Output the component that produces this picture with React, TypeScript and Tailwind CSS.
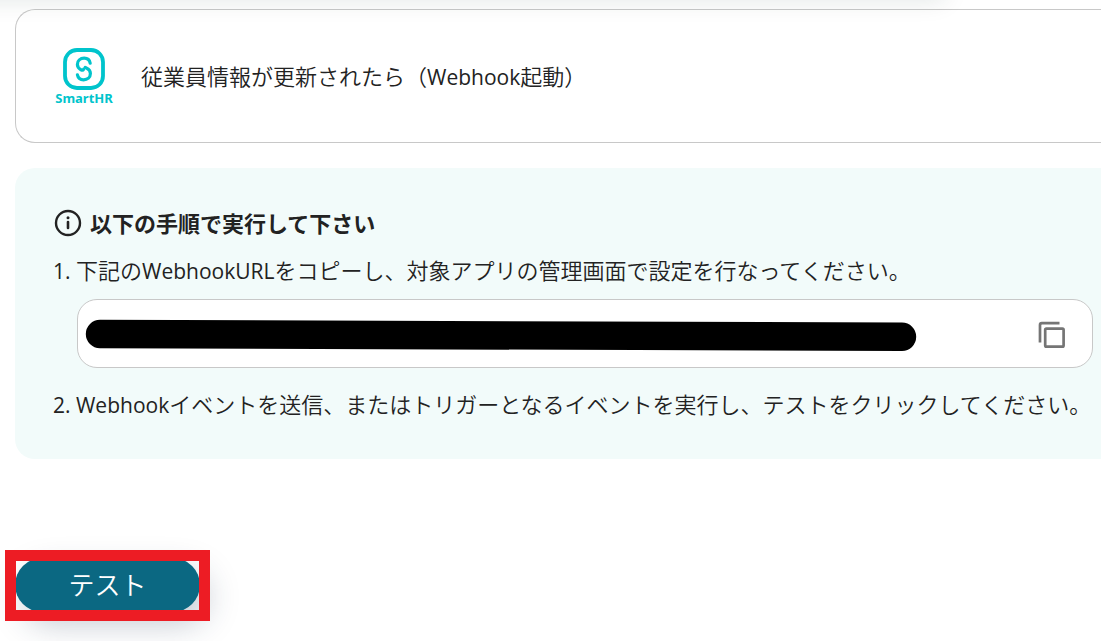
import React from 'react';

function SmartHRLogo() {
  return (
    <div className="flex w-[58px] shrink-0 flex-col items-center pt-px text-[#00c4cc]">
      <svg viewBox="0 0 42 42" className="h-[42px] w-[42px]" fill="none" stroke="currentColor" aria-hidden="true">
        <rect x="2" y="2" width="38" height="38" rx="12" strokeWidth="3.8" />
        <path
          d="M27.2 15.2C26.6 12 24.3 10.2 21.2 10.2C17.3 10.2 14.4 12.8 14.4 16.4C14.4 19 16 20.6 18 21.8C19.2 22.4 20.2 22 20.6 21.2"
          strokeWidth="3.2"
          strokeLinecap="round"
        />
        <path
          d="M14.4 26.8C15 30 17.4 31.8 20.6 31.8C24.5 31.8 27.4 29.2 27.4 25.6C27.4 23 26 21.2 23.8 20.2L22.2 19.4"
          strokeWidth="3.2"
          strokeLinecap="round"
        />
      </svg>
      <span className="font-['Noto_Sans',sans-serif] text-[13px] leading-4 font-bold">SmartHR</span>
    </div>
  );
}

function InfoIcon() {
  return (
    <svg viewBox="0 0 28 28" className="h-7 w-7 shrink-0" fill="none" stroke="currentColor" aria-hidden="true">
      <circle cx="14" cy="14" r="12" strokeWidth="2.4" />
      <path d="M14 13V19" strokeWidth="2.6" strokeLinecap="round" />
      <circle cx="14" cy="8.8" r="1.5" fill="currentColor" stroke="none" />
    </svg>
  );
}

function CopyIcon() {
  return (
    <svg viewBox="0 0 28 28" className="h-7 w-7" fill="none" stroke="currentColor" strokeWidth="2.7" aria-hidden="true">
      <path d="M2 22.5V5Q2 3.2 3.8 3.2H21.5" />
      <rect x="7.2" y="8.6" width="18.4" height="18" rx="1.2" />
    </svg>
  );
}

// Latin words sit a step smaller and heavier than the Japanese around them
function Latin({ children }: { children: React.ReactNode }) {
  return <span className="text-[21px] leading-none font-normal">{children}</span>;
}

export default function App() {
  return (
    <div className="relative min-h-screen overflow-hidden bg-white font-['Open_Sans','Noto_Sans_CJK_JP',sans-serif] text-[22px] leading-8 font-[350] text-[#222]">
      {/* Shadow of the sticky header above */}
      <div className="pointer-events-none absolute -top-8 left-0 z-10 h-6 w-11/12 -translate-x-16 shadow-[0_8px_24px_rgba(0,50,40,0.12)]" />

      <main className="pt-[9px] pl-[15px]">
        <section className="flex h-[134px] items-center gap-7 rounded-l-[20px] border border-r-0 border-[#c8c8c8] bg-white pl-[39px]">
          <SmartHRLogo />
          <p>従業員情報が更新されたら（<Latin>Webhook</Latin>起動）</p>
        </section>

        <section className="mt-[25px] rounded-l-[20px] bg-[#f2fbfa] pt-[39px] pr-2 pb-[39px] pl-[38px]">
          <h2 className="flex items-center gap-2 pl-px font-bold">
            <InfoIcon />
            以下の手順で実行して下さい
          </h2>
          <ol className="mt-[15px]">
            <li>
              <label htmlFor="webhook-url" className="block whitespace-nowrap">
                <Latin>1. </Latin>下記の<Latin>WebhookURL</Latin>をコピーし、対象アプリの管理画面で設定を行なってください。
              </label>
              <div className="relative mt-[13px] ml-6 flex h-[69px] items-center rounded-[20px] border border-[#c8c8c8] bg-white pr-6 pl-2">
                <input id="webhook-url" type="text" readOnly className="min-w-0 flex-1 outline-none" />
                {/* Masked URL */}
                <svg viewBox="0 0 832 34" className="pointer-events-none absolute left-[7px] w-[832px]" aria-hidden="true">
                  <path d="M15 17L817 19.8" stroke="#000" strokeWidth="28.4" strokeLinecap="round" />
                </svg>
                <button type="button" aria-label="コピー" className="p-0.5 text-[#757575]">
                  <CopyIcon />
                </button>
              </div>
            </li>
            <li className="mt-5 whitespace-nowrap">
              <Latin>2. Webhook</Latin>イベントを送信、またはトリガーとなるイベントを実行し、テストをクリックしてください。
            </li>
          </ol>
        </section>

        <div className="relative mt-[99px] w-fit">
          <button
            type="button"
            className="block h-[54px] w-[185px] rounded-full bg-[#0b6882] text-[26px] text-white shadow-[8px_12px_32px_rgba(30,50,80,0.26)]"
          >
            テスト
          </button>
          {/* Highlight frame */}
          <span className="pointer-events-none absolute -inset-x-[10px] -top-2 h-[71px] border-[11px] border-[#ed1c24]" />
        </div>
      </main>
    </div>
  );
}
